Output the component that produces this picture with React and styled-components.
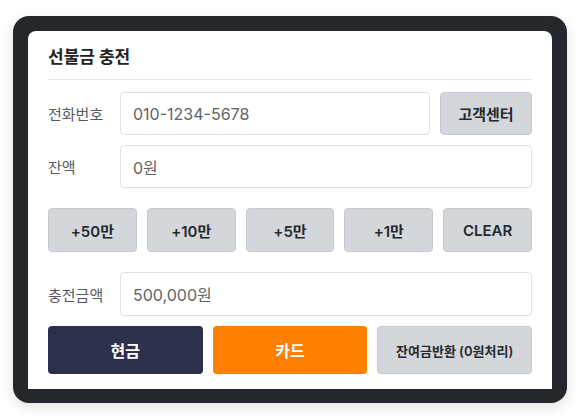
import React from "react";
import styled, { createGlobalStyle } from "styled-components";

const Global = createGlobalStyle`
  html, body { margin: 0; padding: 0; background: #ffffff; }
  body { font-family: "Inter", "Noto Sans CJK KR", sans-serif; }
  * { box-sizing: border-box; }
`;

const Stage = styled.div`
  width: 580px;
  height: 420px;
  padding: 16px 13px 0 13px;
`;

const Frame = styled.div`
  width: 554px;
  height: 387px;
  background: #24282c;
  border-radius: 16px;
  padding: 15px 15px 14px 15px;
  box-shadow: 0 4px 14px rgba(0, 0, 0, 0.12);
`;

const Panel = styled.div`
  height: 100%;
  background: #ffffff;
  border-radius: 8px 8px 0 0;
  padding: 16px 20px;
  display: flex;
  flex-direction: column;
`;

const Header = styled.div`
  font-size: 17px;
  font-weight: 700;
  color: #222;
  line-height: 20px;
  padding-bottom: 12px;
  border-bottom: 1px solid #e3e5e8;
  margin-bottom: 12px;
`;

const Row = styled.div`
  display: flex;
  align-items: center;
  gap: 10px;
  margin-top: ${(p) => p.$mt || 0}px;
`;

const Label = styled.div`
  width: 62px;
  flex: none;
  font-size: 15px;
  color: #555b61;
`;

const Input = styled.div`
  flex: 1;
  height: ${(p) => p.$h || 43}px;
  border: 1px solid #dee2e6;
  border-radius: 4px;
  padding: 0 12px;
  display: flex;
  align-items: center;
  font-size: 16px;
  color: #5f6468;
`;

const GrayButton = styled.button`
  flex: ${(p) => (p.$fixed ? "none" : "1")};
  width: ${(p) => (p.$fixed ? "92px" : "auto")};
  height: ${(p) => p.$h || 43}px;
  background: #d3d7db;
  border: 1px solid #c6cacf;
  border-radius: 4px;
  font-family: inherit;
  font-size: ${(p) => p.$fs || 15}px;
  font-weight: 600;
  color: #25292d;
  padding: 0;
  cursor: pointer;
`;

const ColorButton = styled.button`
  flex: 1;
  height: 48px;
  background: ${(p) => p.$bg};
  border: none;
  border-radius: 4px;
  font-family: inherit;
  font-size: 16px;
  font-weight: 700;
  color: #ffffff;
  cursor: pointer;
`;

const QuickRow = styled.div`
  display: grid;
  grid-template-columns: repeat(5, 1fr);
  gap: 10px;
  margin-top: 20px;
`;

const ActionRow = styled.div`
  display: grid;
  grid-template-columns: repeat(3, 1fr);
  gap: 10px;
  margin-top: 10px;
`;

export default function App() {
  return (
    <Stage>
      <Global />
      <Frame>
        <Panel>
          <Header>선불금 충전</Header>
          <Row>
            <Label>전화번호</Label>
            <Input>010-1234-5678</Input>
            <GrayButton $fixed $fs={15}>고객센터</GrayButton>
          </Row>
          <Row $mt={10}>
            <Label>잔액</Label>
            <Input>0원</Input>
          </Row>
          <QuickRow>
            <GrayButton $h={44}>+50만</GrayButton>
            <GrayButton $h={44}>+10만</GrayButton>
            <GrayButton $h={44}>+5만</GrayButton>
            <GrayButton $h={44}>+1만</GrayButton>
            <GrayButton $h={44}>CLEAR</GrayButton>
          </QuickRow>
          <Row $mt={20}>
            <Label>충전금액</Label>
            <Input $h={44}>500,000원</Input>
          </Row>
          <ActionRow>
            <ColorButton $bg="#2d304b">현금</ColorButton>
            <ColorButton $bg="#ff7f00">카드</ColorButton>
            <GrayButton $h={48} $fs={13}>잔여금반환 (0원처리)</GrayButton>
          </ActionRow>
        </Panel>
      </Frame>
    </Stage>
  );
}
